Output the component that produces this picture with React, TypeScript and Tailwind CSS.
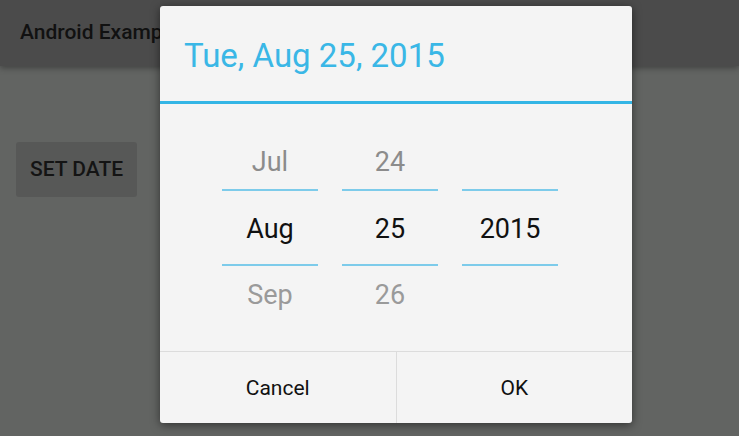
const columns = [
  { prev: 'Jul', current: 'Aug', next: 'Sep' },
  { prev: '24', current: '25', next: '26' },
  { prev: '', current: '2015', next: '' },
];

function PickerColumn({ prev, current, next }: { prev: string; current: string; next: string }) {
  return (
    <div className="flex w-[96px] flex-col">
      <div className="flex h-[56px] items-center justify-center pt-[2px] text-[27px] text-[#8c8c8c]">{prev}</div>
      <div className="h-[2px] bg-[#7dcbea]" />
      <div className="flex h-[73px] items-center justify-center pt-[3px] text-[27px] text-[#111]">{current}</div>
      <div className="h-[2px] bg-[#7dcbea]" />
      <div className="flex h-[58px] items-center justify-center text-[27px] text-[#9a9a9a]">{next}</div>
    </div>
  );
}

export default function App() {
  return (
    <div
      className="relative h-[436px] w-[739px] overflow-hidden bg-[#626462]"
      style={{ fontFamily: 'Roboto, "Noto Sans", sans-serif' }}
    >
      <div className="flex h-[66px] items-center bg-[#4b4b4b] px-5 shadow-[0_2px_6px_rgba(0,0,0,0.35)]">
        <span className="text-[21px] font-medium text-[#111]">Android Example</span>
      </div>

      <div className="px-4 pt-[76px]">
        <button className="h-[55px] w-[121px] rounded-[3px] bg-[#575857] text-[21px] font-medium text-[#141414]">
          SET DATE
        </button>
      </div>

      <div className="absolute left-[160px] top-[6px] flex h-[417px] w-[472px] flex-col rounded-[3px] bg-[#f4f4f4] shadow-[0_2px_10px_rgba(0,0,0,0.5)]">
        <div className="flex h-[95px] shrink-0 items-center px-6 pt-1">
          <span className="text-[33px] text-[#3ab7e6]">Tue, Aug 25, 2015</span>
        </div>
        <div className="h-[3px] shrink-0 bg-[#33b5e5]" />

        <div className="flex flex-1 gap-6 pl-[62px] pt-[29px]">
          {columns.map((c, i) => (
            <PickerColumn key={i} {...c} />
          ))}
        </div>

        <div className="flex h-[72px] shrink-0 border-t border-[#dcdcdc]">
          <button className="flex flex-1 items-center justify-center border-r border-[#dcdcdc] pt-[2px] text-[21px] text-[#111]">
            Cancel
          </button>
          <button className="flex flex-1 items-center justify-center pt-[2px] text-[21px] text-[#111]">OK</button>
        </div>
      </div>
    </div>
  );
}
